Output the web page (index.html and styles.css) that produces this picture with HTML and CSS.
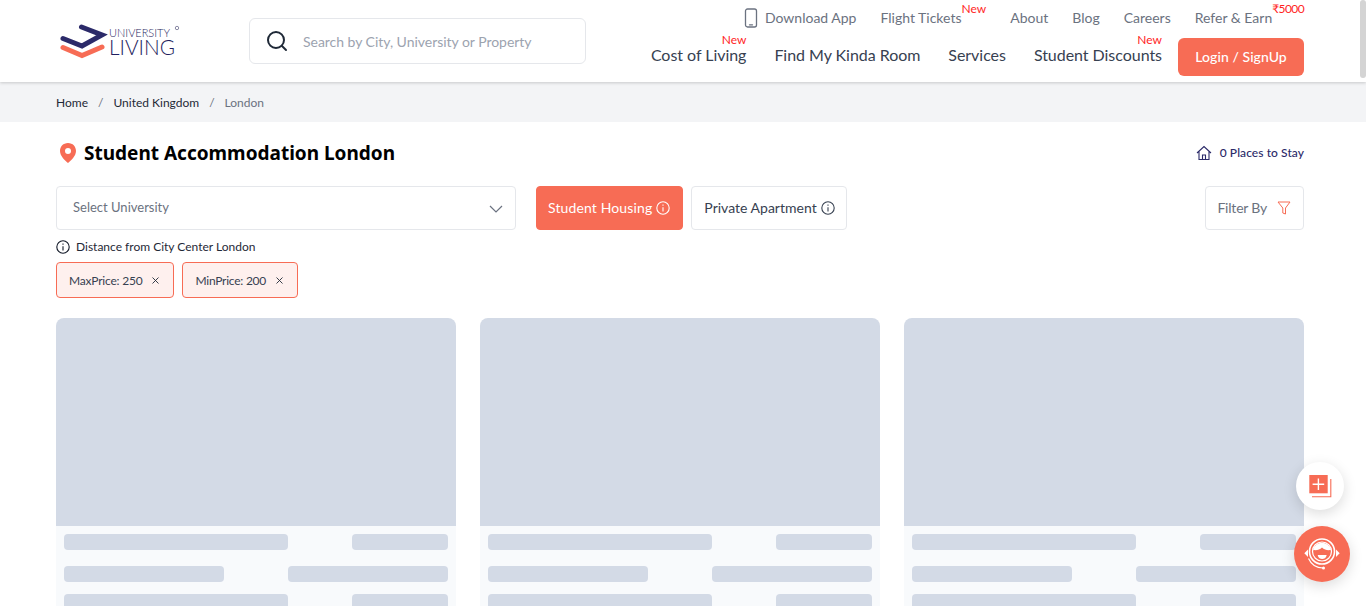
FILE: index.html
```html
<!DOCTYPE html>
<html lang="en">
<head>
<meta charset="utf-8">
<title>Student Accommodation London</title>
<link rel="stylesheet" href="styles.css">
</head>
<body>
<header class="header">
  <a class="logo" href="#">
    <svg class="logo-svg" width="124" height="40" viewBox="56 20 124 40">
      <path class="logo-navy" d="M81.500 27 L102 35 L82 46 L63 38.500"/>
      <path class="logo-orange" d="M63 47.500 L82 55.500 L102 47"/>
      <text class="logo-top" x="109" y="37" textLength="61" lengthAdjust="spacingAndGlyphs">UNIVERSITY</text>
      <text class="logo-bottom" x="109" y="54.500" textLength="66" lengthAdjust="spacingAndGlyphs">LIVING</text>
      <circle class="logo-reg" cx="177" cy="28" r="1.700"/>
    </svg>
  </a>
  <div class="search">
    <svg class="search-icon" width="22" height="22" viewBox="0 0 22 22"><circle cx="10" cy="10" r="8"/><path d="M16 16 L20 20"/></svg>
    <span class="search-text">Search by City, University or Property</span>
  </div>
  <nav class="nav">
    <div class="nav-top">
      <a class="top-link app-link" href="#">
        <svg class="phone" width="14" height="20" viewBox="0 0 14 20"><rect x="1.500" y="1" width="11" height="18" rx="2"/><path d="M5.500 16.800 H8.500"/></svg>
        Download App</a>
      <a class="top-link" href="#">Flight Tickets<span class="tag tag-top">New</span></a>
      <a class="top-link" href="#">About</a>
      <a class="top-link" href="#">Blog</a>
      <a class="top-link" href="#">Careers</a>
      <a class="top-link" href="#">Refer &amp; Earn<span class="tag tag-earn">₹5000</span></a>
    </div>
    <div class="nav-main">
      <a class="main-link" href="#">Cost of Living<span class="tag tag-main">New</span></a>
      <a class="main-link" href="#">Find My Kinda Room</a>
      <a class="main-link" href="#">Services</a>
      <a class="main-link" href="#">Student Discounts<span class="tag tag-main">New</span></a>
      <a class="login" href="#">Login / SignUp</a>
    </div>
  </nav>
</header>

<div class="crumbs">
  <a class="crumb" href="#">Home</a><span class="sep">/</span>
  <a class="crumb" href="#">United Kingdom</a><span class="sep">/</span>
  <span class="crumb-now">London</span>
</div>

<main class="content">
  <div class="title-row">
    <div class="title-left">
      <svg class="pin" width="18" height="22" viewBox="0 0 18 22"><path d="M9 1 C4.200 1 1 4.600 1 9 C1 14 6 18.500 9 21 C12 18.500 17 14 17 9 C17 4.600 13.800 1 9 1 Z M9 6 A3 3 0 1 1 9 12 A3 3 0 1 1 9 6 Z"/></svg>
      <h1 class="title">Student Accommodation London</h1>
    </div>
    <div class="places">
      <svg class="home" width="16" height="16" viewBox="0 0 16 16"><path d="M1 8 L8 1.500 L15 8 M3 6.500 V14.500 H13 V6.500 M6.500 14.500 V10 H9.500 V14.500"/></svg>
      <span>0 Places to Stay</span>
    </div>
  </div>

  <div class="filters">
    <div class="select">
      <span class="select-text">Select University</span>
      <svg class="chev" width="14" height="8" viewBox="0 0 14 8"><path d="M1 1 L7 7 L13 1"/></svg>
    </div>
    <button class="tab tab-on" type="button"><span class="tab-label">Student Housing</span>
      <svg class="info" width="14" height="14" viewBox="0 0 14 14"><circle cx="7" cy="7" r="6.200"/><path d="M7 6.200 V10.500 M7 3.500 V4.800"/></svg>
    </button>
    <button class="tab tab-apt" type="button"><span class="tab-label">Private Apartment</span>
      <svg class="info" width="14" height="14" viewBox="0 0 14 14"><circle cx="7" cy="7" r="6.200"/><path d="M7 6.200 V10.500 M7 3.500 V4.800"/></svg>
    </button>
    <button class="tab filter-btn" type="button"><span class="tab-label">Filter By</span>
      <svg class="funnel" width="14" height="14" viewBox="0 0 14 14"><path d="M1 1 H13 L8.500 7 V13 L5.800 12 V7 Z"/></svg>
    </button>
  </div>

  <div class="distance">
    <svg class="info info-dark" width="14" height="14" viewBox="0 0 14 14"><circle cx="7" cy="7" r="6.200"/><path d="M7 6.200 V10.500 M7 3.500 V4.800"/></svg>
    <span class="distance-text">Distance from City Center London</span>
  </div>

  <div class="chips">
    <span class="chip">MaxPrice: 250<svg class="chip-x" width="9" height="9" viewBox="0 0 9 9"><path d="M1.500 1.500 L7.500 7.500 M7.500 1.500 L1.500 7.500"/></svg></span>
    <span class="chip chip-min">MinPrice: 200<svg class="chip-x" width="9" height="9" viewBox="0 0 9 9"><path d="M1.500 1.500 L7.500 7.500 M7.500 1.500 L1.500 7.500"/></svg></span>
  </div>

  <div class="cards">
    <article class="card">
      <div class="card-img"></div>
      <div class="card-body">
        <div class="row row-a"><i class="bar w224"></i><i class="bar w96"></i></div>
        <div class="row row-b"><i class="bar w160"></i><i class="bar w160"></i></div>
        <div class="row"><i class="bar w224"></i><i class="bar w96"></i></div>
      </div>
    </article>
    <article class="card">
      <div class="card-img"></div>
      <div class="card-body">
        <div class="row row-a"><i class="bar w224"></i><i class="bar w96"></i></div>
        <div class="row row-b"><i class="bar w160"></i><i class="bar w160"></i></div>
        <div class="row"><i class="bar w224"></i><i class="bar w96"></i></div>
      </div>
    </article>
    <article class="card">
      <div class="card-img"></div>
      <div class="card-body">
        <div class="row row-a"><i class="bar w224"></i><i class="bar w96"></i></div>
        <div class="row row-b"><i class="bar w160"></i><i class="bar w160"></i></div>
        <div class="row"><i class="bar w224"></i><i class="bar w96"></i></div>
      </div>
    </article>
  </div>
</main>

<div class="bubble bubble-compare">
  <svg width="24" height="24" viewBox="0 0 24 24"><path class="cmp-back" d="M22.800 5 V22.800 H4"/><rect class="cmp-front" x="1.300" y="1" width="18.400" height="18.300"/><path class="cmp-plus" d="M10.400 4.400 V16 M4.600 10.200 H16.200"/></svg>
</div>
<div class="bubble bubble-help">
  <svg width="38" height="38" viewBox="0 0 38 38">
    <circle class="hp-ring" cx="19" cy="16.500" r="12.500"/>
    <circle class="hp-line" cx="19" cy="16.500" r="9.500"/>
    <path class="hp-fill" d="M10 14.800 A9.300 9.300 0 0 1 28 14.800 C25 15.800 21.500 14.800 19 12.500 C16.500 14.800 13 15.800 10 14.800 Z"/>
    <path class="hp-fill" d="M14.700 20 H23.700 C23.200 23 21 24 19.200 24 C17.400 24 15.200 23 14.700 20 Z"/>
    <path class="hp-fill" d="M5 14.500 L1.300 18.300 L5 22 Z M33 14.500 L36.700 18.300 L33 22 Z"/>
    <path class="hp-line" d="M5.500 23.500 C9 31 15 33 20 33"/>
    <circle class="hp-fill" cx="20.500" cy="33" r="1.500"/>
  </svg>
</div>
<div class="scrollbar"><div class="scroll-thumb"></div></div>
</body>
</html>
```
FILE: styles.css
```css
* { box-sizing: border-box; }
html, body { margin: 0; height: 606px; overflow: hidden; background: #fff; }
body { font-family: "Lato", "Noto Sans", sans-serif; color: #111827; }
a { color: inherit; text-decoration: none; }
svg { display: block; flex: none; }

.header { height: 82px; display: flex; align-items: flex-start; padding: 0 62px 0 56px; background: #fff; box-shadow: 0 1px 3px rgba(0,0,0,.18); position: relative; }
.logo { width: 193px; padding-top: 20px; }
.logo-navy { fill: none; stroke: #2b2a69; stroke-width: 5; stroke-linecap: round; stroke-linejoin: miter; }
.logo-orange { fill: none; stroke: #f76c55; stroke-width: 5; stroke-linecap: round; }
.logo-top { font-size: 12px; font-weight: 300; fill: #1f1e5e; }
.logo-bottom { font-size: 22px; font-weight: 300; fill: #1f1e5e; }
.logo-reg { fill: none; stroke: #8a8aa5; stroke-width: 1; }

.search { width: 337px; height: 46px; margin-top: 18px; display: flex; align-items: center; gap: 15px; padding-left: 16px; border: 1px solid #e5e7eb; border-radius: 6px; }
.search-icon { fill: none; stroke: #1f2937; stroke-width: 2; stroke-linecap: round; }
.search-text { font-size: 14px; color: #9ca3af; letter-spacing: -.03px; }

.nav { margin-left: auto; display: flex; flex-direction: column; align-items: flex-end; }
.nav-top { display: flex; align-items: center; gap: 24px; height: 36px; padding-bottom: 1px; }
.top-link { font-size: 14px; color: #6b7280; display: flex; align-items: center; }
.app-link { gap: 7px; }
.phone { fill: none; stroke: #6b7280; stroke-width: 1.300; stroke-linecap: round; }
.nav-main { display: flex; align-items: center; gap: 28px; height: 40px; margin-top: 1px; }
.main-link { font-size: 16px; color: #374151; position: relative; margin-top: -5px; letter-spacing: -.04px; }
.tag { color: #ff1f1f; font-size: 12px; line-height: 14px; white-space: nowrap; letter-spacing: 0; }
.tag-top { align-self: flex-start; margin-top: -7px; }
.tag-earn { align-self: flex-start; margin-top: -7px; letter-spacing: -.6px; }
.tag-main { position: absolute; right: 0; top: -12px; }
.login { width: 126px; height: 38px; margin-left: -12px; padding-bottom: 2px; display: flex; align-items: center; justify-content: center; border-radius: 6px; background: #f76c55; color: #fff; font-size: 14px; font-weight: 500; letter-spacing: .08px; }

.crumbs { height: 40px; display: flex; align-items: center; padding-left: 56px; background: #f3f4f6; font-size: 12px; }
.crumb { color: #1f2937; }
.sep { margin: 0 10px; color: #6b7280; }
.crumb-now { color: #6b7280; }

.content { padding: 0 62px 0 56px; }
.title-row { height: 64px; display: flex; align-items: center; justify-content: space-between; padding-bottom: 3px; }
.title-left { display: flex; align-items: center; gap: 7px; padding-left: 3px; }
.pin { fill: #f76c55; fill-rule: evenodd; }
.title { margin: 0; font-family: "Noto Sans", sans-serif; font-size: 19px; font-weight: 700; color: #000; }
.places { display: flex; align-items: center; gap: 8px; font-size: 12px; font-weight: 500; letter-spacing: .07px; color: #2b2a69; }
.home { fill: none; stroke: #2b2a69; stroke-width: 1.100; }

.filters { display: flex; align-items: stretch; height: 44px; }
.select { width: 460px; margin-right: 20px; display: flex; align-items: center; justify-content: space-between; padding: 0 12px 0 16px; border: 1px solid #e5e7eb; border-radius: 4px; }
.select-text { font-size: 13px; color: #6b7280; margin-top: -2px; }
.chev { fill: none; stroke: #6b7280; stroke-width: 1.200; margin-top: 2px; }
.tab { margin: 0 8px 0 0; padding: 0 12px 0 11px; display: flex; align-items: center; gap: 4px; font: inherit; font-size: 14px; color: #374151; background: #fff; border: 1px solid #e5e7eb; border-radius: 4px; }
.tab-label { margin-top: -1px; }
.tab-on { background: #f76c55; border-color: #f76c55; color: #fff; letter-spacing: .13px; }
.tab-apt { padding: 0 11px 0 12px; letter-spacing: .01px; }
.info { fill: none; stroke: #374151; stroke-width: 1.100; }
.tab-on .info { stroke: #fff; }
.info-dark { stroke: #111827; }
.filter-btn { margin: 0 0 0 auto; color: #6b7280; gap: 10px; letter-spacing: -.2px; }
.funnel { fill: none; stroke: #f76c55; stroke-width: 1; }

.distance { display: flex; align-items: center; gap: 6px; height: 14px; margin-top: 10px; font-size: 12px; color: #1f2937; }
.distance-text { margin-top: -2px; }
.chips { display: flex; gap: 8px; margin-top: 8px; }
.chip { height: 36px; display: flex; align-items: center; gap: 8px; padding: 0 13px 0 12px; font-size: 12px; letter-spacing: -.2px; color: #374151; background: #fef0ee; border: 1px solid #f76c55; border-radius: 4px; }
.chip-min { padding-left: 13px; gap: 9px; letter-spacing: -.25px; }
.chip-x { fill: none; stroke: #1f2937; stroke-width: .9; }

.cards { display: grid; grid-template-columns: repeat(3, 400px); gap: 24px; margin-top: 20px; }
.card-img { height: 208px; background: #d3dae6; border-radius: 8px 8px 0 0; }
.card-body { padding: 8px; background: #f8fafc; }
.row { display: flex; justify-content: space-between; margin-bottom: 12px; }
.row-a { margin-bottom: 16px; }
.bar { display: block; height: 16px; background: #d3dae6; border-radius: 4px; }
.w224 { width: 224px; }
.w96 { width: 96px; }
.w160 { width: 160px; }

.bubble { position: fixed; display: flex; align-items: center; justify-content: center; border-radius: 50%; box-shadow: 0 4px 14px rgba(0,0,0,.14); }
.bubble-compare { left: 1296px; top: 462px; width: 48px; height: 48px; background: #fff; }
.bubble-help { left: 1294px; top: 526px; width: 56px; height: 56px; background: #f76c55; }
.cmp-back { fill: none; stroke: #f76c55; stroke-width: 1.100; }
.cmp-front { fill: #f76c55; }
.cmp-plus { fill: none; stroke: #fff; stroke-width: 1.400; }
.hp-ring { fill: none; stroke: #fff; stroke-width: 1.600; }
.hp-line { fill: none; stroke: #fff; stroke-width: 1.200; }
.hp-fill { fill: #fff; }

.scrollbar { position: fixed; right: 0; top: 0; bottom: 0; width: 6px; }
.scroll-thumb { height: 78px; background: #d4d4d4; border-radius: 3px; }
```
